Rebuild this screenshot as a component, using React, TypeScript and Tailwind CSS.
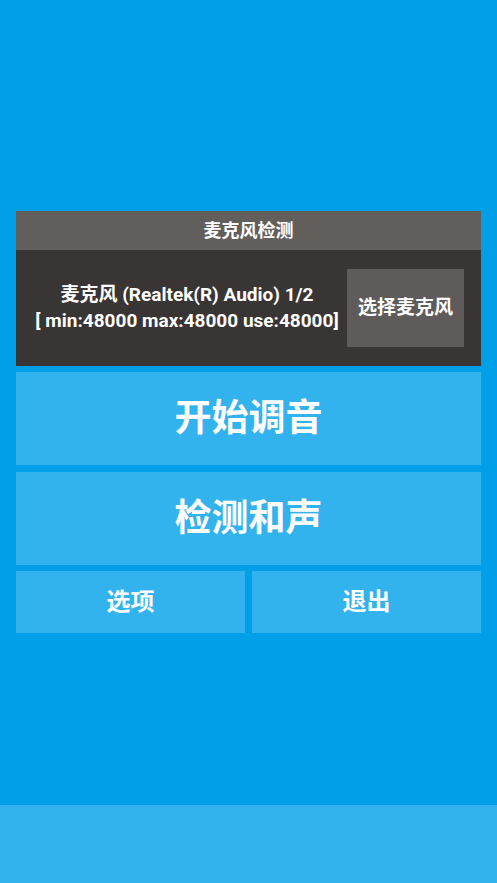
export default function App() {
  const font = { fontFamily: 'Roboto, "Noto Sans CJK SC", sans-serif' };
  return (
    <div className="flex h-[883px] w-full flex-col bg-[#009fe8] text-white" style={font}>
      <div className="flex flex-col px-4 pt-[211px]">
        <div className="flex h-[39px] items-center justify-center bg-[#625e5c] text-[18px] font-bold">
          麦克风检测
        </div>
        <div className="flex h-[116px] items-center bg-[#393534] pl-[11px] pr-[17px]">
          <div className="flex flex-1 flex-col items-center text-[19px] font-bold leading-[26px]">
            <div>麦克风 (Realtek(R) Audio) 1/2</div>
            <div>[ min:48000 max:48000 use:48000]</div>
          </div>
          <div className="flex h-[78px] w-[117px] items-center justify-center bg-[#5f5b5a] text-[19px] font-bold">
            选择麦克风
          </div>
        </div>
        <div className="mt-[6px] flex h-[93px] items-center justify-center bg-[#33b3ed] text-[37px] font-bold">
          开始调音
        </div>
        <div className="mt-[7px] flex h-[93px] items-center justify-center bg-[#33b3ed] text-[37px] font-bold">
          检测和声
        </div>
        <div className="mt-[6px] grid h-[62px] grid-cols-2 gap-[7px]">
          <div className="flex items-center justify-center bg-[#33b3ed] text-[24px] font-bold">选项</div>
          <div className="flex items-center justify-center bg-[#33b3ed] text-[24px] font-bold">退出</div>
        </div>
      </div>
      <div className="flex-1" />
      <div className="h-[78px] bg-[#33b3ed]" />
    </div>
  );
}
